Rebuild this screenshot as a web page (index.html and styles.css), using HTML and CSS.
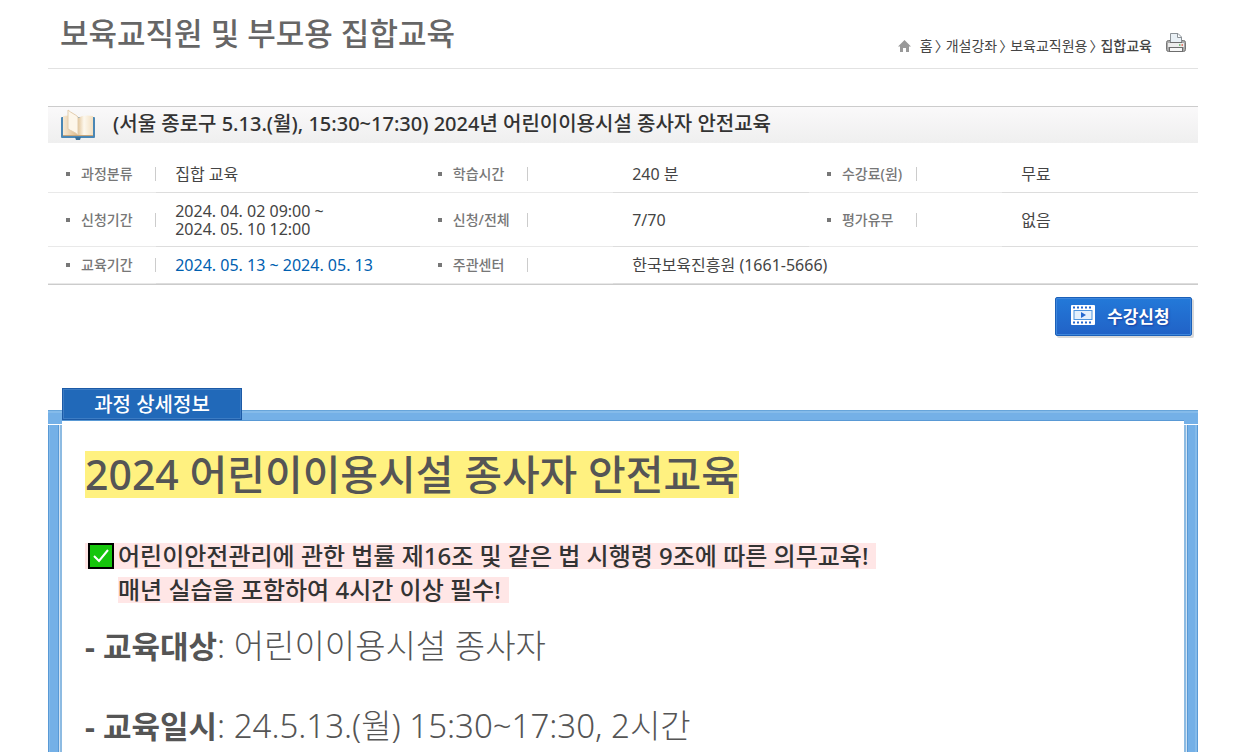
FILE: index.html
```html
<!DOCTYPE html>
<html lang="ko">
<head>
  <meta charset="UTF-8" />
  <meta name="viewport" content="width=device-width, initial-scale=1.0" />
  <title>보육교직원 및 부모용 집합교육</title>
  <link rel="stylesheet" href="styles.css">
</head>
<body>

<!-- ===== Page header ===== -->
<header class="page-head">
  <h1>보육교직원 및 부모용 집합교육</h1>
  <nav class="location">
    <svg class="home" viewBox="0 0 13 12" aria-hidden="true"><path d="M6.500 0L13 6.500H11V12H8V8H5V12H2V6.500H0Z" fill="#999"/></svg>
    <a href="#">홈</a><span class="sep">〉</span><a href="#">개설강좌</a><span class="sep">〉</span><a href="#">보육교직원용</a><span class="sep">〉</span><strong>집합교육</strong>
    <button class="print" type="button" aria-label="인쇄">
      <svg viewBox="0 0 20 20" aria-hidden="true">
        <rect x=".5" y="7.500" width="19" height="11" rx="2" fill="#a9a9a9" stroke="#777"/>
        <path d="M4.500 9.500V.500H12L15.500 4V9.500Z" fill="#e9f0f5" stroke="#8b9196"/>
        <path d="M11.500 1V4.500H15" fill="#fff" stroke="#8b9196"/>
        <rect x="2" y="10" width="16" height="4" fill="#ececec"/>
        <path d="M4 9.500H16" stroke="#6d6d6d"/>
        <rect x="3.500" y="14.500" width="13" height="4" fill="#f6f6f6" stroke="#6d6d6d"/>
        <path d="M13 12H14.500" stroke="#7cc47c" stroke-width="2"/>
        <path d="M15.500 12H17" stroke="#e58072" stroke-width="2"/>
      </svg>
    </button>
  </nav>
</header>

<main>
  <!-- ===== Course summary ===== -->
  <div class="course-title">
    <svg class="book" viewBox="0 0 36 32" aria-hidden="true">
      <defs>
        <linearGradient id="pageLeft"><stop offset="0" stop-color="#f7e9d3"/><stop offset="1" stop-color="#dcb98a"/></linearGradient>
        <linearGradient id="pageRight"><stop offset="0" stop-color="#e3c69b"/><stop offset=".4" stop-color="#fdf8ee"/><stop offset="1" stop-color="#f3e0c2"/></linearGradient>
      </defs>
      <rect x="1" y="8" width="34" height="21" rx="1" fill="#4a87b5"/>
      <path d="M15 28H21L20 31H16Z" fill="#3a709a"/>
      <path d="M3 7C8 6 14 6 18 9V27H3Z" fill="url(#pageLeft)"/>
      <path d="M18 9C22 6 28 6 33 7V26H18Z" fill="url(#pageRight)"/>
      <path d="M8 1C11 4 15 5 18 8V26C15 23 11 22 8 20Z" fill="#fdf6ea" stroke="#e3cdae"/>
      <path d="M3 26.500H33" stroke="#c7a57b"/>
    </svg>
    <h2>(서울 종로구 5.13.(월), 15:30~17:30) 2024년 어린이이용시설 종사자 안전교육</h2>
  </div>

  <table class="info">
    <colgroup>
      <col class="c-label-first"><col class="c-value-first">
      <col class="c-label"><col class="c-value">
      <col class="c-label"><col class="c-value">
    </colgroup>
    <tr>
      <th scope="row"><span>과정분류</span></th><td>집합 교육</td>
      <th scope="row"><span>학습시간</span></th><td>240 분</td>
      <th scope="row"><span>수강료(원)</span></th><td>무료</td>
    </tr>
    <tr class="tall">
      <th scope="row"><span>신청기간</span></th><td>2024. 04. 02 09:00 ~<br>2024. 05. 10 12:00</td>
      <th scope="row"><span>신청/전체</span></th><td>7/70</td>
      <th scope="row"><span>평가유무</span></th><td>없음</td>
    </tr>
    <tr>
      <th scope="row"><span>교육기간</span></th><td class="period">2024. 05. 13 ~ 2024. 05. 13</td>
      <th scope="row"><span>주관센터</span></th><td colspan="3">한국보육진흥원 (1661-5666)</td>
    </tr>
  </table>

  <div class="actions">
    <button class="apply" type="button">
      <svg viewBox="0 0 24 20" aria-hidden="true">
        <rect width="24" height="20" rx="1" fill="#fff"/>
        <path d="M2 2.500H22M2 17.500H22" stroke="#2468cf" stroke-width="2" stroke-dasharray="2 2"/>
        <rect x="3" y="5.500" width="18" height="9" fill="#e4f0fc" stroke="#4f95dd"/>
        <path d="M10 7L15 10L10 13Z" fill="#2468cf"/>
      </svg>
      수강신청
    </button>
  </div>

  <!-- ===== Course detail ===== -->
  <section class="detail">
    <h3 class="tab">과정 상세정보</h3>
    <div class="frame-top"></div>
    <div class="frame-body">
      <h4><mark>2024 어린이이용시설 종사자 안전교육</mark></h4>
      <div class="notice">
        <p><mark class="first"><svg class="check" viewBox="0 0 26 26" aria-hidden="true"><rect x="1" y="1" width="24" height="24" fill="#16c60c" stroke="#000" stroke-width="2"/><path d="M6 13L11 18L20 7" fill="none" stroke="#fff" stroke-width="2"/></svg>어린이안전관리에 관한 법률 제16조 및 같은 법 시행령 9조에 따른 의무교육!</mark></p>
        <p class="second"><mark>매년 실습을 포함하여 4시간 이상 필수!</mark></p>
      </div>
      <p class="item"><b>- 교육대상</b>: 어린이이용시설 종사자</p>
      <p class="item"><b>- 교육일시</b>: 24.5.13.(월) 15:30~17:30, 2시간</p>
    </div>
  </section>
</main>

</body>
</html>
```
FILE: styles.css
```css
* { box-sizing:border-box; margin:0; padding:0; }
body {
  min-height:100vh; padding:0 37px 0 48px; display:flex; flex-direction:column;
  background:#fff; color:#444; font-family:"Noto Sans","Noto Sans CJK KR",sans-serif; font-size:16px;
}
main { flex:1; display:flex; flex-direction:column; }
button { border:none; background:none; font-family:inherit; cursor:pointer; }
svg { display:block; }

/* header */
.page-head {
  display:flex; justify-content:space-between; height:69px; padding:0 12px;
  border-bottom:1px solid #e2e2e2;
}
.page-head h1 { font-size:31px; line-height:66px; font-weight:500; color:#666; white-space:nowrap; }
.location {
  display:flex; align-items:center; height:28px; margin-top:32px;
  font-size:14px; line-height:28px; white-space:nowrap;
}
.location a { color:#444; text-decoration:none; }
.location strong { font-weight:500; }
.location .home { width:13px; height:12px; margin-right:9px; }
.sep { width:13px; padding-left:2px; }
.print { width:20px; height:20px; margin:0 0 6px 14px; }
.print svg { width:20px; height:20px; }

/* course title */
.course-title {
  display:flex; align-items:center; gap:17px; height:37px; margin-top:37px; padding-left:12px;
  border-top:1px solid #ccc; background:linear-gradient(#faf9fa,#efefef);
}
.course-title h2 { padding-bottom:2px; font-size:20px; line-height:34px; font-weight:500; color:#333; }
.book { width:36px; height:32px; flex:none; }

/* info table */
.info {
  width:100%; margin-top:13px; table-layout:fixed; border-collapse:separate; border-spacing:0;
  border-bottom:1px solid #ccc; line-height:18px;
}
.c-label-first { width:9.4%; }
.c-value-first { width:22.9%; }
.c-label { width:16.8%; }
.c-value { width:17%; }
.info tr { height:37px; }
.info .tall { height:54px; }
.info th, .info td { border-bottom:1px solid #ddd; text-align:left; vertical-align:middle; }
.info th { border-color:#e9e9e9; font-size:14px; font-weight:500; color:#777; }
.info th span {
  display:flex; align-items:center; width:108px; height:14px; padding-left:18px;
  border-right:1px solid #ccc;
}
.info th span::before { content:""; width:4px; height:4px; margin-right:11px; background:#777; }
.info td { padding-left:19px; white-space:nowrap; }
.info .period { color:#0060b0; }

.actions { display:flex; justify-content:flex-end; padding:12px 6px 0; }
.apply {
  display:flex; align-items:center; gap:12px; width:137px; height:39px; padding:0 0 3px 15px;
  border:1px solid #1b60b8; border-radius:2px; background:linear-gradient(#2379d9,#2162c6);
  box-shadow:2px 2px 0 #d9d9d9, inset 0 0 0 1px #3f86dc;
  color:#fff; font-size:17px; font-weight:700; text-shadow:1px 1px 2px #1a3fa0;
}
.apply svg { width:24px; height:20px; }

/* detail box */
.detail { flex:1; display:flex; flex-direction:column; margin-top:52px; }
.tab {
  position:relative; align-self:flex-start; width:180px; height:32px; margin:0 0 -10px 14px;
  border:1px solid #1c5aa6; box-shadow:inset 0 0 0 1px #3c7cc4; background:#2169b9;
  color:#fff; font-size:20px; line-height:31px; font-weight:500; text-align:center;
}
.frame-top {
  height:14px;
  background:
    linear-gradient(#5999d5 1px,#fff 1px) 14px 10px / calc(100% - 28px) 4px no-repeat,
    linear-gradient(#68a5da 1px,#85bbea 1px,#85bbea 3px,#74b0e7 3px);
}
.frame-body {
  flex:1; margin-top:1px; padding:26px 37px 0;
  background:
    linear-gradient(to right,#5999d5 1px,#85bbea 1px,#85bbea 2px,#74b0e7 2px,#74b0e7 10px,#5999d5 10px,#5999d5 11px,#d3e4f4 11px,#d3e4f4 12px,#8dbbe2 12px) left / 14px 100% no-repeat,
    linear-gradient(to left,#5999d5 1px,#85bbea 1px,#85bbea 3px,#74b0e7 3px,#74b0e7 10px,#5999d5 10px,#5999d5 11px,#d3e4f4 11px,#d3e4f4 12px,#8dbbe2 12px) right / 14px 100% no-repeat;
}
.frame-body mark { display:inline-block; color:inherit; }
.frame-body h4 { height:48px; font-size:41px; line-height:47px; font-weight:500; color:#555; }
.frame-body h4 mark { background:#fff180; }
.notice { margin-top:44px; font-size:24px; line-height:26px; font-weight:500; color:#333; }
.notice p { height:26px; margin-bottom:8px; }
.notice mark { height:26px; padding-right:8px; background:#ffe6e6; }
.notice .first { display:inline-flex; padding-left:3px; }
.notice .second { padding-left:33px; }
.check { width:26px; height:26px; margin-right:4px; }
.item { height:80px; font-size:33px; line-height:70px; font-weight:300; color:#555; }
.item b { font-size:31px; font-weight:700; }
```
